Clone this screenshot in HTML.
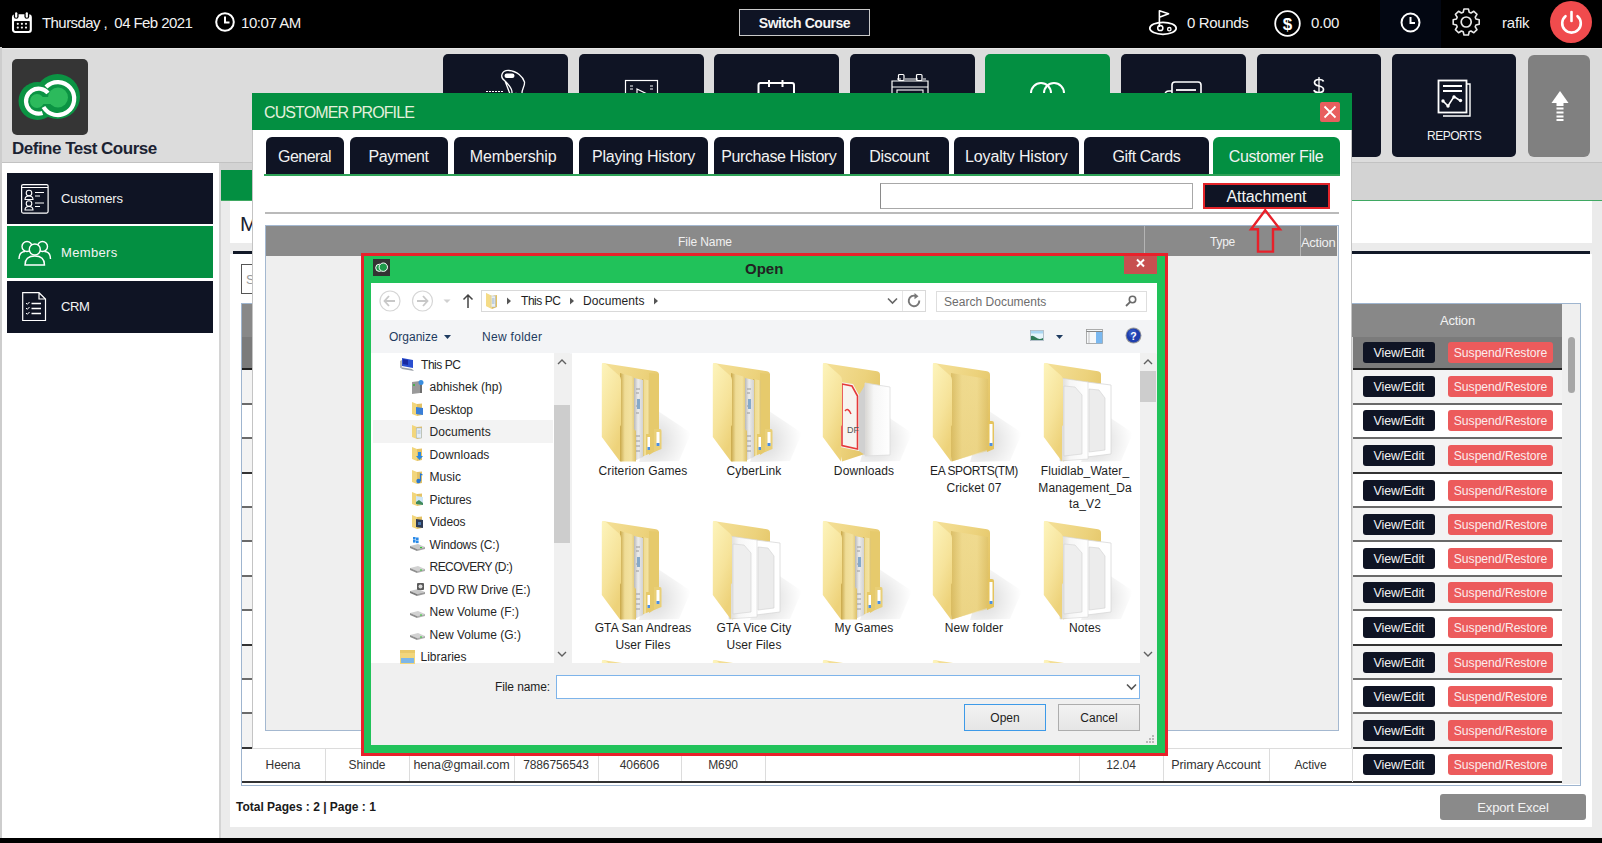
<!DOCTYPE html>
<html><head><meta charset="utf-8">
<style>
*{box-sizing:border-box;margin:0;padding:0}
html,body{width:1602px;height:843px;overflow:hidden;background:#dcdcdc;font-family:"Liberation Sans",sans-serif}
.a{position:absolute}
.t{position:absolute;white-space:nowrap;line-height:1}
.c{position:absolute;display:flex;align-items:center;justify-content:center;white-space:nowrap}
.navy{background:#0f1424}
svg{position:absolute;overflow:visible}

</style></head><body>
<svg width="0" height="0" style="position:absolute;left:0;top:0">
<defs>
 <linearGradient id="gFront" x1="0" y1="0" x2="0.5" y2="1"><stop offset="0" stop-color="#fdf4bc"/><stop offset="0.6" stop-color="#f6e39a"/><stop offset="1" stop-color="#edd27a"/></linearGradient>
 <linearGradient id="gBack" x1="0" y1="0" x2="1" y2="0.6"><stop offset="0" stop-color="#f5e19a"/><stop offset="0.6" stop-color="#ecd27c"/><stop offset="1" stop-color="#e2c262"/></linearGradient>
 <linearGradient id="gPanel" x1="0" y1="0" x2="1" y2="0"><stop offset="0" stop-color="#c9a84a"/><stop offset="0.3" stop-color="#efdc96"/><stop offset="0.7" stop-color="#f3e2a0"/><stop offset="1" stop-color="#dcc06a"/></linearGradient>
 <linearGradient id="gPaper" x1="0" y1="0" x2="1" y2="0"><stop offset="0" stop-color="#b9b9b9"/><stop offset="0.45" stop-color="#ececec"/><stop offset="1" stop-color="#d2d2d2"/></linearGradient>
 <linearGradient id="gWhite" x1="0" y1="0" x2="1" y2="0"><stop offset="0" stop-color="#d8d6d2"/><stop offset="0.35" stop-color="#f6f6f6"/><stop offset="1" stop-color="#ffffff"/></linearGradient>
 <radialGradient id="gShadow" cx="0.25" cy="0.6" r="0.75"><stop offset="0" stop-color="#000" stop-opacity="0.16"/><stop offset="0.6" stop-color="#000" stop-opacity="0.06"/><stop offset="1" stop-color="#000" stop-opacity="0"/></radialGradient>
 <g id="f_back">
  <path d="M56 48 L92 72 L80 100 L40 101Z" fill="url(#gShadow)"/>
  <path d="M3.5 2 L57 10.2 Q60 10.8 60 14 V88 L22 100.5 Z" fill="url(#gBack)"/>
 </g>
 <path id="f_frontp" d="M3.5 2 Q5 1.5 7 3 L20 14.5 Q22 16 22 19 V64 L21 65.5 V100.5 L2.8 76 V3.5 Z"/>
 <symbol id="f_docs" viewBox="0 0 92 104">
  <use href="#f_back"/>
  <path d="M50 12 L60 13 V88 L50 94Z" fill="#e6ca6c"/>
  <path d="M55 68 H61 Q62.5 68 62.5 70 V88 L55 91Z" fill="#e9cf77"/>
  <rect x="57.5" y="71" width="3" height="14" fill="#fff"/><rect x="57.5" y="82" width="3" height="3" fill="#4c8fe0"/>
  <path d="M43 18 L51 19.5 V92 L43 96Z" fill="url(#gPanel)"/>
  <path d="M47 73 H52 V92 L47 94Z" fill="#e6c96a"/>
  <rect x="48.5" y="76" width="2.5" height="13" fill="#fff"/><rect x="48.5" y="86" width="2.5" height="3" fill="#4c8fe0"/>
  <path d="M35 17 L44 19 V96 L35 100Z" fill="url(#gPaper)"/>
  <path d="M37 28 H41 M37 32 H40 M37 45 H41 M37 52 H40 M37 75 H41 M37 80 H41 M37 85 H41 M37 90 H41" stroke="#9a9a9a" stroke-width="1"/>
  <rect x="38" y="38" width="3" height="10" fill="#86a9c9"/>
  <path d="M21 12 L35 16 V68 L37 70 V100.5 L21 100.5Z" fill="url(#gPanel)"/>
  <use href="#f_frontp" fill="url(#gFront)"/>
 </symbol>
 <symbol id="f_plain" viewBox="0 0 92 104">
  <use href="#f_back"/>
  <path d="M57 60 H62 Q64 60 64 62 V88 L57 91Z" fill="#e5c45e"/>
  <rect x="59.5" y="63" width="3" height="22" fill="#fff"/><rect x="59.5" y="82" width="3" height="3" fill="#4c8fe0"/>
  <path d="M21 12 L58 18 V90 L21 100.5Z" fill="url(#gPanel)" opacity="0.55"/>
  <use href="#f_frontp" fill="url(#gFront)"/>
 </symbol>
 <symbol id="f_pdf" viewBox="0 0 92 104">
  <use href="#f_back"/>
  <path d="M45 22 L70 26 V94 L45 95Z" fill="url(#gWhite)" stroke="#dcdcdc" stroke-width="0.8"/>
  <path d="M20 21 L33 23 L39 34 V90 L20 86Z" fill="#f7f4f0"/>
  <path d="M22 23 L32 25 L37.5 35 V88 L22 84.5Z" fill="none" stroke="#e53a3a" stroke-width="1.6"/>
  <path d="M25 50 Q28 46 31 53" fill="none" stroke="#e53a3a" stroke-width="1.4"/>
  <text x="27" y="72" font-family="Liberation Sans" font-size="9" fill="#555">DF</text>
  <path d="M39 34 L45 24 V94 L39 90Z" fill="#d0d0d0"/>
  <use href="#f_frontp" fill="url(#gFront)"/>
 </symbol>
 <symbol id="f_white" viewBox="0 0 92 104">
  <use href="#f_back"/>
  <path d="M46 21 L70 24 V93 L46 96Z" fill="#fff" stroke="#d8d8d8" stroke-width="0.8"/>
  <path d="M48 28 L58 29 L64 37 V89 L48 91Z" fill="#ececec" stroke="#d0d0d0" stroke-width="0.6"/>
  <path d="M19 17 L47 21 V98 L19 100Z" fill="url(#gWhite)" stroke="#d4d4d4" stroke-width="0.6"/>
  <path d="M23 25 L34 26 L41 34 V93 L23 95Z" fill="#eeeeee" stroke="#d2d2d2" stroke-width="0.6"/>
  <use href="#f_frontp" fill="url(#gFront)"/>
 </symbol>
 <!-- small nav icons 17x16 -->
 <symbol id="i_pc" viewBox="0 0 17 16"><path d="M3 2 L14 4 V12 L3 10Z" fill="#2a4fd0"/><path d="M4 3 L9 4 V9 L4 8Z" fill="#1a2aa0"/><path d="M1 11 L13 13 L15 15 L3 13Z" fill="#9aa0a8"/><path d="M1 5 L3 4 V11 L1 12Z" fill="#b5b5b5"/></symbol>
 <symbol id="i_net" viewBox="0 0 17 16"><path d="M3 3 L11 2 V14 L3 15Z" fill="#9a9a9a"/><path d="M11 2 L13 3 V14 L11 14Z" fill="#6e6e6e"/><circle cx="12" cy="3.5" r="2.5" fill="#3a8ee0"/><rect x="4" y="5" width="2" height="2" fill="#4caf50"/></symbol>
 <symbol id="i_fdesk" viewBox="0 0 17 16"><path d="M3 1 L8 3 V15 L3 13Z" fill="#f2d67c"/><path d="M8 3 L13 2.5 V14 L8 15Z" fill="#e4c265"/><path d="M7 6 L14 7 V14 L7 13Z" fill="#3a7fd8"/></symbol>
 <symbol id="i_fdoc" viewBox="0 0 17 16"><path d="M3 1 L8 3 V15 L3 13Z" fill="#f2d67c"/><path d="M8 3 L13 2.5 V14 L8 15Z" fill="#e4c265"/><rect x="7.5" y="4" width="5" height="10" fill="#e6eef6" stroke="#9ab0c6" stroke-width="0.5"/><path d="M8.5 7 H11.5 M8.5 9 H11.5" stroke="#7a9ab8" stroke-width="0.6"/></symbol>
 <symbol id="i_fdl" viewBox="0 0 17 16"><path d="M3 1 L8 3 V15 L3 13Z" fill="#f2d67c"/><path d="M8 3 L13 2.5 V14 L8 15Z" fill="#e4c265"/><path d="M9 6 H12 V10 H14 L10.5 14 L7 10 H9Z" fill="#2a88e0"/></symbol>
 <symbol id="i_fmus" viewBox="0 0 17 16"><path d="M3 1 L8 3 V15 L3 13Z" fill="#f2d67c"/><path d="M8 3 L13 2.5 V14 L8 15Z" fill="#e4c265"/><circle cx="9.5" cy="12" r="2.2" fill="#2a78d0"/><path d="M11.5 12 V5 L13.5 6" fill="none" stroke="#2a78d0" stroke-width="1.2"/></symbol>
 <symbol id="i_fpic" viewBox="0 0 17 16"><path d="M3 1 L8 3 V15 L3 13Z" fill="#f2d67c"/><path d="M8 3 L13 2.5 V14 L8 15Z" fill="#e4c265"/><path d="M7 5 L14 6 V14 L7 13Z" fill="#cfe6f6"/><path d="M7 11 L10 9 L14 12 V14 L7 13Z" fill="#3f8a5a"/></symbol>
 <symbol id="i_fvid" viewBox="0 0 17 16"><path d="M3 1 L8 3 V15 L3 13Z" fill="#f2d67c"/><path d="M8 3 L13 2.5 V14 L8 15Z" fill="#e4c265"/><path d="M7 5 L14 6 V14 L7 13Z" fill="#2d3a55"/><rect x="9" y="8" width="3" height="3" fill="#4a7ab0"/></symbol>
 <symbol id="i_win" viewBox="0 0 17 16"><path d="M1 10 L9 8 L16 11 L8 13Z" fill="#c8c8c8"/><path d="M1 10 V12 L8 15 V13Z" fill="#8a8a8a"/><path d="M8 13 V15 L16 13 V11Z" fill="#a5a5a5"/><g fill="#2a8ae8"><rect x="4" y="1" width="2.6" height="2.6"/><rect x="7" y="1.5" width="2.6" height="2.6"/><rect x="4" y="4" width="2.6" height="2.6"/><rect x="7" y="4.5" width="2.6" height="2.6"/></g><rect x="11" y="11" width="2" height="1" fill="#3c3"/></symbol>
 <symbol id="i_drv" viewBox="0 0 17 16"><path d="M1 9 L9 7 L16 10 L8 12Z" fill="#d2d2d2"/><path d="M1 9 V11 L8 14 V12Z" fill="#8f8f8f"/><path d="M8 12 V14 L16 12 V10Z" fill="#adadad"/><rect x="11" y="10.5" width="2" height="1" fill="#3c3"/></symbol>
 <symbol id="i_dvd" viewBox="0 0 17 16"><path d="M1 10 L9 8 L16 11 L8 13Z" fill="#c8c8c8"/><path d="M1 10 V12 L8 15 V13Z" fill="#7a7a7a"/><path d="M8 13 V15 L16 13 V11Z" fill="#9a9a9a"/><rect x="8" y="2" width="7" height="7" rx="1" fill="#5a5a5a"/><circle cx="11.5" cy="5.5" r="2" fill="#ddd"/></symbol>
 <symbol id="i_lib" viewBox="0 0 17 16"><rect x="1" y="3" width="15" height="12" fill="#f2d67c"/><rect x="1" y="1" width="15" height="3" fill="#e9c96a"/><rect x="2" y="9" width="13" height="5" fill="#7db6e8"/></symbol>
</defs></svg>
<!-- TOP BAR -->
<div class="a" style="left:0;top:0;width:1602px;height:48px;background:#000"></div>
<!-- calendar icon -->
<svg style="left:12px;top:12px" width="20" height="21" viewBox="0 0 20 21">
 <rect x="1" y="3.2" width="17.8" height="16.8" rx="2.2" fill="none" stroke="#fff" stroke-width="2.1"/>
 <rect x="1" y="3.2" width="17.8" height="6" rx="1.5" fill="#fff"/>
 <rect x="2.8" y="9.2" width="14.2" height="9" fill="#000"/>
 <rect x="1.8" y="0" width="4.8" height="6.8" rx="2.4" fill="#000"/><rect x="12.4" y="0" width="4.8" height="6.8" rx="2.4" fill="#000"/>
 <rect x="3.1" y="0.2" width="2.2" height="5.6" rx="1.1" fill="#fff"/><rect x="13.7" y="0.2" width="2.2" height="5.6" rx="1.1" fill="#fff"/>
 <g fill="#f0f0f0"><circle cx="5.8" cy="11.8" r="1.1"/><circle cx="9.9" cy="11.8" r="1.1"/><circle cx="14" cy="11.8" r="1.1"/>
 <circle cx="5.8" cy="15.6" r="1.1"/><circle cx="9.9" cy="15.6" r="1.1"/><circle cx="14" cy="15.6" r="1.1"/></g>
</svg>
<div class="t" style="left:42px;top:15px;font-size:15px;color:#f2f2f2;letter-spacing:-0.57px">Thursday ,&nbsp; 04 Feb 2021</div>
<!-- clock icon -->
<svg style="left:215px;top:12px" width="20" height="20" viewBox="0 0 20 20">
 <circle cx="10" cy="10" r="8.8" fill="none" stroke="#fff" stroke-width="2"/>
 <path d="M10 4.5 V10.5 H14.5" fill="none" stroke="#fff" stroke-width="2"/>
</svg>
<div class="t" style="left:241px;top:15px;font-size:15px;color:#f2f2f2;letter-spacing:-0.45px">10:07 AM</div>
<!-- switch course -->
<div class="c" style="left:739px;top:9px;width:131px;height:27px;background:#0f1424;border:1px solid #c9c9c9;font-size:14px;font-weight:bold;color:#f5f5f5;letter-spacing:-0.45px">Switch Course</div>
<!-- golf icon -->
<svg style="left:1149px;top:10px" width="29" height="26" viewBox="0 0 29 26">
 <ellipse cx="14" cy="18.3" rx="13.2" ry="6" fill="none" stroke="#fff" stroke-width="1.7"/>
 <path d="M10.4 17 V0.8 L19.6 3.8 L10.4 7.2" fill="none" stroke="#fff" stroke-width="1.6" stroke-linejoin="round"/>
 <circle cx="11.3" cy="18" r="2.6" fill="none" stroke="#fff" stroke-width="1.5"/>
 <circle cx="20.3" cy="19.2" r="1.7" fill="none" stroke="#fff" stroke-width="1.4"/>
</svg>
<div class="t" style="left:1187px;top:15px;font-size:15px;color:#f2f2f2;letter-spacing:-0.35px">0 Rounds</div>
<!-- dollar -->
<svg style="left:1274px;top:10px" width="27" height="27" viewBox="0 0 27 27">
 <circle cx="13.5" cy="13.5" r="12.3" fill="none" stroke="#fff" stroke-width="1.8"/>
 <text x="13.5" y="19.5" text-anchor="middle" font-family="Liberation Sans" font-weight="bold" font-size="17" fill="#fff">$</text>
</svg>
<div class="t" style="left:1311px;top:15px;font-size:15px;color:#f2f2f2;letter-spacing:-0.3px">0.00</div>
<!-- clock area -->
<div class="a" style="left:1380px;top:0;width:61px;height:48px;background:#030712"></div>
<svg style="left:1400px;top:12px" width="21" height="21" viewBox="0 0 21 21">
 <circle cx="10.5" cy="10.5" r="9" fill="none" stroke="#fff" stroke-width="2"/>
 <path d="M10.5 5 V11 H15" fill="none" stroke="#fff" stroke-width="2"/>
</svg>
<!-- gear -->
<svg style="left:1451px;top:8px" width="30" height="28" viewBox="0 0 30 28">
 <g transform="translate(15.2 14)" fill="none" stroke="#e8e8e8" stroke-width="1.6" stroke-linejoin="round">
  <path d="M9.74,-3.01 L13.01,-2.23 L13.01,2.23 L9.74,3.01 L9.02,4.76 L10.78,7.62 L7.62,10.78 L4.76,9.02 L3.01,9.74 L2.23,13.01 L-2.23,13.01 L-3.01,9.74 L-4.76,9.02 L-7.62,10.78 L-10.78,7.62 L-9.02,4.76 L-9.74,3.01 L-13.01,2.23 L-13.01,-2.23 L-9.74,-3.01 L-9.02,-4.76 L-10.78,-7.62 L-7.62,-10.78 L-4.76,-9.02 L-3.01,-9.74 L-2.23,-13.01 L2.23,-13.01 L3.01,-9.74 L4.76,-9.02 L7.62,-10.78 L10.78,-7.62 L9.02,-4.76 Z"/>
 </g>
 <circle cx="15.2" cy="14" r="5" fill="none" stroke="#e8e8e8" stroke-width="1.7"/>
</svg>
<div class="t" style="left:1502px;top:15px;font-size:15px;color:#f2f2f2;letter-spacing:-0.2px">rafik</div>
<!-- power -->
<div class="a" style="left:1550px;top:1px;width:42px;height:42px;border-radius:50%;background:#f04b4d"></div>
<svg style="left:1550px;top:1px" width="42" height="42" viewBox="0 0 42 42">
 <path d="M15.5 15.2 A9.3 9.3 0 1 0 27.5 15.2" fill="none" stroke="#fff" stroke-width="2.6" stroke-linecap="round"/>
 <path d="M21.5 11 V20" stroke="#fff" stroke-width="2.6" stroke-linecap="round"/>
</svg>
<!-- HEADER AREA -->
<div class="a" style="left:0;top:47px;width:2px;height:791px;background:#cdcdcd"></div>
<div class="a" style="left:2px;top:48px;width:1600px;height:115px;background:#dcdcdc"></div><div class="a" style="left:2px;top:48px;width:1600px;height:1px;background:#e8e8e8"></div>
<div class="a" style="left:2px;top:162px;width:1600px;height:1px;background:#c2c2c2"></div>
<!-- logo -->
<div class="a" style="left:12px;top:59px;width:76px;height:76px;background:#353535;border-radius:5px"></div>
<svg style="left:12px;top:60px" width="76" height="76" viewBox="0 0 76 76">
 <circle cx="25.5" cy="41" r="19" fill="#0b9343"/>
 <circle cx="45.5" cy="36.5" r="22.5" fill="#0b9343"/>
 <path d="M36 33 A12.5 12.5 0 1 0 30.5 53" fill="none" stroke="#fff" stroke-width="4.2"/>
 <path d="M34 27 A16.5 16.5 0 1 1 31.5 47" fill="none" stroke="#fff" stroke-width="4.2"/>
 <circle cx="25" cy="41" r="7" fill="#2cba5c"/>
 <circle cx="46" cy="37.5" r="10" fill="#2cba5c"/>
 <rect x="25" y="37" width="18" height="7" fill="#2cba5c"/>
</svg>
<div class="t" style="left:12px;top:140px;font-size:17px;font-weight:bold;color:#1b2232;letter-spacing:-0.5px">Define Test Course</div>

<!-- nav buttons -->
<div class="a navy" style="left:443px;top:54px;width:125px;height:103px;border-radius:5px"></div>
<div class="a navy" style="left:579px;top:54px;width:125px;height:103px;border-radius:5px"></div>
<div class="a navy" style="left:714px;top:54px;width:125px;height:103px;border-radius:5px"></div>
<div class="a navy" style="left:850px;top:54px;width:125px;height:103px;border-radius:5px"></div>
<div class="a" style="left:985px;top:54px;width:125px;height:103px;border-radius:5px;background:#038f41"></div>
<div class="a navy" style="left:1121px;top:54px;width:125px;height:103px;border-radius:5px"></div>
<div class="a navy" style="left:1257px;top:54px;width:124px;height:103px;border-radius:5px"></div>
<div class="a navy" style="left:1392px;top:54px;width:124px;height:103px;border-radius:5px"></div>
<div class="a" style="left:1528px;top:55px;width:62px;height:102px;border-radius:6px;background:#808080"></div>
<!-- btn icons (tops, mostly hidden) -->
<svg style="left:483px;top:69px" width="50" height="30" viewBox="0 0 50 30">
 <path d="M22 12 C16 8 19 1 26 1.5 C34 2 40 8 41.5 13 C42 17 39 20 39 24 V30 M29 30 V23 C29 19 26 16 22 12 Z" fill="none" stroke="#fff" stroke-width="1.3"/>
 <rect x="21.5" y="4.5" width="10" height="4.5" rx="2.2" fill="#fff"/>
 <circle cx="33" cy="25" r="1.2" fill="#fff"/>
 <path d="M3 22.5 H20" stroke="#fff" stroke-width="1.2" stroke-dasharray="2 1"/>
</svg>
<svg style="left:625px;top:80px" width="34" height="20" viewBox="0 0 34 20">
 <rect x="0.5" y="0.5" width="32" height="18" fill="none" stroke="#fff" stroke-width="1.2"/>
 <path d="M5 6 H8 M5 9 H8 M25 6 H28 M25 9 H28" stroke="#fff" stroke-width="1"/>
 <path d="M12 9 L20 13 L12 16 Z" fill="none" stroke="#fff" stroke-width="1.2"/>
</svg>
<svg style="left:757px;top:79px" width="40" height="20" viewBox="0 0 40 20">
 <path d="M1.5 19 V6 Q1.5 4 3.5 4 H35 Q37 4 37 6 V19" fill="none" stroke="#fff" stroke-width="2"/>
 <path d="M12 1 V8 M25.5 1 V8" stroke="#fff" stroke-width="2"/>
</svg>
<svg style="left:891px;top:73px" width="40" height="22" viewBox="0 0 40 22">
 <path d="M1 21 V8 H37 V21 M1 14 H37" fill="none" stroke="#fff" stroke-width="1.2"/>
 <path d="M6 6 H10 M14 6 H27 M32 6 H35" stroke="#fff" stroke-width="1.2"/>
 <rect x="7.5" y="1.5" width="5.5" height="6" rx="1" fill="none" stroke="#fff" stroke-width="1.2"/>
 <rect x="25.5" y="1.5" width="5.5" height="6" rx="1" fill="none" stroke="#fff" stroke-width="1.2"/>
 <rect x="6" y="17" width="26" height="5" fill="none" stroke="#fff" stroke-width="1.1"/>
</svg>
<svg style="left:1029px;top:82px" width="38" height="14" viewBox="0 0 38 14">
 <circle cx="12" cy="11" r="10" fill="none" stroke="#fff" stroke-width="2"/>
 <circle cx="25" cy="11" r="10" fill="none" stroke="#fff" stroke-width="2"/>
</svg>
<svg style="left:1164px;top:81px" width="40" height="14" viewBox="0 0 40 14">
 <rect x="8" y="1" width="29" height="16" rx="3" fill="none" stroke="#fff" stroke-width="1.6"/>
 <path d="M1 14 Q1 10 5 10 H8" fill="none" stroke="#fff" stroke-width="1.6"/>
 <path d="M12 9 H32" stroke="#fff" stroke-width="1.8"/>
</svg>
<svg style="left:1312px;top:76px" width="14" height="20" viewBox="0 0 14 20"><path d="M7 1 V19" stroke="#fff" stroke-width="1.3"/><path d="M11.5 5.5 Q11 3.5 7 3.5 Q2.5 3.5 2.5 6.5 Q2.5 9 7 10 Q11.5 11 11.5 13.5 Q11.5 16.5 7 16.5 Q2.5 16.5 2 14" fill="none" stroke="#fff" stroke-width="1.7"/></svg>
<!-- reports icon -->
<svg style="left:1437px;top:79px" width="36" height="40" viewBox="0 0 36 40">
 <path d="M6 5 H33 V37 H6" fill="none" stroke="#fff" stroke-width="1.4"/>
 <rect x="1.5" y="1.5" width="28" height="32" fill="#0f1424" stroke="#fff" stroke-width="1.8"/>
 <path d="M6 7 H25 M6 12 H25" stroke="#fff" stroke-width="1.8"/>
 <path d="M6 22 L11 27 L17 17.5 L23 21.5" fill="none" stroke="#fff" stroke-width="1.6"/>
 <circle cx="6" cy="22" r="1.7" fill="#fff"/><circle cx="11" cy="27" r="1.7" fill="#fff"/><circle cx="17" cy="18" r="1.7" fill="#fff"/><circle cx="23.5" cy="21.5" r="1.7" fill="#fff"/>
</svg>
<div class="t" style="left:1427px;top:130px;font-size:12px;color:#f2f2f2;letter-spacing:-0.5px">REPORTS</div>
<!-- up arrow -->
<svg style="left:1550px;top:90px" width="20" height="32" viewBox="0 0 20 32">
 <path d="M10 1 L18.5 13 H1.5 Z" fill="#fff"/>
 <rect x="6.5" y="12" width="7" height="4" fill="#fff"/>
 <rect x="6.5" y="17.5" width="7" height="2" fill="#fff"/>
 <rect x="6.5" y="21.5" width="7" height="2" fill="#fff"/>
 <rect x="6.5" y="25.5" width="7" height="2" fill="#fff"/>
 <rect x="6.5" y="29" width="7" height="2" fill="#fff"/>
</svg>
<!-- SIDEBAR -->
<div class="a" style="left:2px;top:163px;width:217px;height:675px;background:#fff"></div>
<div class="a" style="left:219px;top:163px;width:2px;height:675px;background:#d4d4d4"></div>
<div class="a navy" style="left:7px;top:173px;width:206px;height:51px"></div>
<div class="a" style="left:7px;top:226px;width:206px;height:52px;background:#038f41"></div>
<div class="a navy" style="left:7px;top:281px;width:206px;height:52px"></div>
<svg style="left:21px;top:184px" width="28" height="30" viewBox="0 0 28 30">
 <rect x="0.6" y="0.6" width="26.5" height="28.5" rx="1.5" fill="none" stroke="#fff" stroke-width="1.2"/>
 <path d="M0.6 3.5 H27" stroke="#fff" stroke-width="1"/>
 <circle cx="8" cy="9" r="2.8" fill="none" stroke="#fff" stroke-width="1.1"/>
 <path d="M4 15.5 Q4 12 8 12 Q12 12 12 15.5 Z" fill="none" stroke="#fff" stroke-width="1.1"/>
 <circle cx="8" cy="19.5" r="2.8" fill="none" stroke="#fff" stroke-width="1.1"/>
 <path d="M4 26 Q4 22.5 8 22.5 Q12 22.5 12 26 Z" fill="none" stroke="#fff" stroke-width="1.1"/>
 <path d="M14 8.5 H23 M14 12 H19 M14 19 H23 M14 22.5 H19" stroke="#fff" stroke-width="1.2"/>
</svg>
<div class="t" style="left:61px;top:192px;font-size:13px;color:#f4f4f4;letter-spacing:-0.1px">Customers</div>
<svg style="left:18px;top:240px" width="34" height="26" viewBox="0 0 34 26">
 <g fill="none" stroke="#fff" stroke-width="1.4">
 <circle cx="9" cy="6.5" r="5"/><circle cx="24.5" cy="6.5" r="5"/>
 <path d="M1 19 Q1 12 7 11.5"/><path d="M32.5 19 Q32.5 12 26.5 11.5"/>
 <circle cx="16.8" cy="9.5" r="5.5" fill="#038f41"/>
 <path d="M7 25 Q7 16 16.8 16 Q26.5 16 26.5 25 Z" fill="#038f41"/>
 </g>
</svg>
<div class="t" style="left:61px;top:246px;font-size:13px;color:#f4f4f4;letter-spacing:0.35px">Members</div>
<svg style="left:22px;top:292px" width="25" height="30" viewBox="0 0 25 30">
 <path d="M0.7 0.7 H17 L23.5 7 V28.5 H0.7 Z M17 0.7 V7 H23.5" fill="none" stroke="#fff" stroke-width="1.2"/>
 <path d="M4 11 L5.3 12.3 L7.5 10 M4 16 L5.3 17.3 L7.5 15 M4 21 L5.3 22.3 L7.5 20" fill="none" stroke="#fff" stroke-width="1"/>
 <path d="M9.5 11.5 H19 M9.5 16.5 H19 M9.5 21.5 H19" stroke="#fff" stroke-width="1.3"/>
</svg>
<div class="t" style="left:61px;top:300px;font-size:13px;color:#f4f4f4;letter-spacing:-0.4px">CRM</div>
<!-- CONTENT -->
<div class="a" style="left:221px;top:163px;width:1381px;height:675px;background:#ebebeb"></div>
<div class="a" style="left:221px;top:163px;width:1381px;height:37px;background:#d3d3d3"></div>
<div class="a" style="left:221px;top:170px;width:300px;height:30px;background:#038f41"></div>
<div class="a" style="left:221px;top:200px;width:1381px;height:1px;background:#3fa862"></div>
<div class="a" style="left:230px;top:201px;width:1362px;height:42px;background:#fff"></div>
<div class="t" style="left:240px;top:213px;font-size:21px;color:#1b2232">Members</div>
<div class="a" style="left:233px;top:251px;width:1357px;height:3px;background:#111827"></div>
<div class="a" style="left:230px;top:254px;width:1362px;height:573px;background:#fff"></div>
<div class="a" style="left:241px;top:264px;width:300px;height:30px;border:1px solid #555;background:#fff"></div>
<div class="t" style="left:246px;top:273px;font-size:13px;color:#999">Search</div>
<div class="a" style="left:241px;top:303px;width:1340px;height:483px;border:1px solid #9fb5cf;background:#fff"></div>
<div class="a" style="left:1562px;top:304px;width:18px;height:480px;background:#efefef"></div>
<div class="a" style="left:1568px;top:337px;width:7px;height:56px;border-radius:4px;background:#a6a6a6"></div>
<div class="a" style="left:242px;top:304px;width:1320px;height:33px;background:#888"></div>
<div class="t" style="left:1440px;top:314px;font-size:13px;color:#f2f2f2;letter-spacing:-0.2px">Action</div>
<div class="a" style="left:242px;top:337px;width:1320px;height:31px;background:#7b7b7b"></div>
<div class="a" style="left:242px;top:368px;width:1320px;height:2px;background:#1e1e1e"></div>
<div class="c" style="left:1363px;top:342px;width:72px;height:21px;border-radius:3px;background:#0f1424;color:#f2f2f2;font-size:12.5px;letter-spacing:-0.1px">View/Edit</div>
<div class="c" style="left:1448px;top:342px;width:105px;height:21px;border-radius:3px;background:#ec5b5c;color:#fbecec;font-size:12.2px;letter-spacing:-0.05px">Suspend/Restore</div>
<div class="a" style="left:242px;top:370px;width:1320px;height:33px;background:#f3f3f3"></div>
<div class="a" style="left:242px;top:403px;width:1320px;height:2px;background:#6a6a6a"></div>
<div class="c" style="left:1363px;top:376px;width:72px;height:21px;border-radius:3px;background:#0f1424;color:#f2f2f2;font-size:12.5px;letter-spacing:-0.1px">View/Edit</div>
<div class="c" style="left:1448px;top:376px;width:105px;height:21px;border-radius:3px;background:#ec5b5c;color:#fbecec;font-size:12.2px;letter-spacing:-0.05px">Suspend/Restore</div>
<div class="a" style="left:242px;top:405px;width:1320px;height:32px;background:#fff"></div>
<div class="a" style="left:242px;top:437px;width:1320px;height:2px;background:#6a6a6a"></div>
<div class="c" style="left:1363px;top:410px;width:72px;height:21px;border-radius:3px;background:#0f1424;color:#f2f2f2;font-size:12.5px;letter-spacing:-0.1px">View/Edit</div>
<div class="c" style="left:1448px;top:410px;width:105px;height:21px;border-radius:3px;background:#ec5b5c;color:#fbecec;font-size:12.2px;letter-spacing:-0.05px">Suspend/Restore</div>
<div class="a" style="left:242px;top:439px;width:1320px;height:33px;background:#f3f3f3"></div>
<div class="a" style="left:242px;top:472px;width:1320px;height:2px;background:#333"></div>
<div class="c" style="left:1363px;top:445px;width:72px;height:21px;border-radius:3px;background:#0f1424;color:#f2f2f2;font-size:12.5px;letter-spacing:-0.1px">View/Edit</div>
<div class="c" style="left:1448px;top:445px;width:105px;height:21px;border-radius:3px;background:#ec5b5c;color:#fbecec;font-size:12.2px;letter-spacing:-0.05px">Suspend/Restore</div>
<div class="a" style="left:242px;top:474px;width:1320px;height:32px;background:#fff"></div>
<div class="a" style="left:242px;top:506px;width:1320px;height:2px;background:#6a6a6a"></div>
<div class="c" style="left:1363px;top:480px;width:72px;height:21px;border-radius:3px;background:#0f1424;color:#f2f2f2;font-size:12.5px;letter-spacing:-0.1px">View/Edit</div>
<div class="c" style="left:1448px;top:480px;width:105px;height:21px;border-radius:3px;background:#ec5b5c;color:#fbecec;font-size:12.2px;letter-spacing:-0.05px">Suspend/Restore</div>
<div class="a" style="left:242px;top:508px;width:1320px;height:32px;background:#f3f3f3"></div>
<div class="a" style="left:242px;top:540px;width:1320px;height:2px;background:#6a6a6a"></div>
<div class="c" style="left:1363px;top:514px;width:72px;height:21px;border-radius:3px;background:#0f1424;color:#f2f2f2;font-size:12.5px;letter-spacing:-0.1px">View/Edit</div>
<div class="c" style="left:1448px;top:514px;width:105px;height:21px;border-radius:3px;background:#ec5b5c;color:#fbecec;font-size:12.2px;letter-spacing:-0.05px">Suspend/Restore</div>
<div class="a" style="left:242px;top:542px;width:1320px;height:33px;background:#fff"></div>
<div class="a" style="left:242px;top:575px;width:1320px;height:2px;background:#6a6a6a"></div>
<div class="c" style="left:1363px;top:548px;width:72px;height:21px;border-radius:3px;background:#0f1424;color:#f2f2f2;font-size:12.5px;letter-spacing:-0.1px">View/Edit</div>
<div class="c" style="left:1448px;top:548px;width:105px;height:21px;border-radius:3px;background:#ec5b5c;color:#fbecec;font-size:12.2px;letter-spacing:-0.05px">Suspend/Restore</div>
<div class="a" style="left:242px;top:577px;width:1320px;height:32px;background:#f3f3f3"></div>
<div class="a" style="left:242px;top:609px;width:1320px;height:2px;background:#6a6a6a"></div>
<div class="c" style="left:1363px;top:582px;width:72px;height:21px;border-radius:3px;background:#0f1424;color:#f2f2f2;font-size:12.5px;letter-spacing:-0.1px">View/Edit</div>
<div class="c" style="left:1448px;top:582px;width:105px;height:21px;border-radius:3px;background:#ec5b5c;color:#fbecec;font-size:12.2px;letter-spacing:-0.05px">Suspend/Restore</div>
<div class="a" style="left:242px;top:611px;width:1320px;height:33px;background:#fff"></div>
<div class="a" style="left:242px;top:644px;width:1320px;height:2px;background:#333"></div>
<div class="c" style="left:1363px;top:617px;width:72px;height:21px;border-radius:3px;background:#0f1424;color:#f2f2f2;font-size:12.5px;letter-spacing:-0.1px">View/Edit</div>
<div class="c" style="left:1448px;top:617px;width:105px;height:21px;border-radius:3px;background:#ec5b5c;color:#fbecec;font-size:12.2px;letter-spacing:-0.05px">Suspend/Restore</div>
<div class="a" style="left:242px;top:646px;width:1320px;height:32px;background:#f3f3f3"></div>
<div class="a" style="left:242px;top:678px;width:1320px;height:2px;background:#6a6a6a"></div>
<div class="c" style="left:1363px;top:652px;width:72px;height:21px;border-radius:3px;background:#0f1424;color:#f2f2f2;font-size:12.5px;letter-spacing:-0.1px">View/Edit</div>
<div class="c" style="left:1448px;top:652px;width:105px;height:21px;border-radius:3px;background:#ec5b5c;color:#fbecec;font-size:12.2px;letter-spacing:-0.05px">Suspend/Restore</div>
<div class="a" style="left:242px;top:680px;width:1320px;height:32px;background:#fff"></div>
<div class="a" style="left:242px;top:712px;width:1320px;height:2px;background:#6a6a6a"></div>
<div class="c" style="left:1363px;top:686px;width:72px;height:21px;border-radius:3px;background:#0f1424;color:#f2f2f2;font-size:12.5px;letter-spacing:-0.1px">View/Edit</div>
<div class="c" style="left:1448px;top:686px;width:105px;height:21px;border-radius:3px;background:#ec5b5c;color:#fbecec;font-size:12.2px;letter-spacing:-0.05px">Suspend/Restore</div>
<div class="a" style="left:242px;top:714px;width:1320px;height:33px;background:#f3f3f3"></div>
<div class="a" style="left:242px;top:747px;width:1320px;height:2px;background:#333"></div>
<div class="c" style="left:1363px;top:720px;width:72px;height:21px;border-radius:3px;background:#0f1424;color:#f2f2f2;font-size:12.5px;letter-spacing:-0.1px">View/Edit</div>
<div class="c" style="left:1448px;top:720px;width:105px;height:21px;border-radius:3px;background:#ec5b5c;color:#fbecec;font-size:12.2px;letter-spacing:-0.05px">Suspend/Restore</div>
<div class="a" style="left:242px;top:749px;width:1320px;height:32px;background:#fff"></div>
<div class="a" style="left:242px;top:781px;width:1320px;height:2px;background:#333"></div>
<div class="c" style="left:1363px;top:754px;width:72px;height:21px;border-radius:3px;background:#0f1424;color:#f2f2f2;font-size:12.5px;letter-spacing:-0.1px">View/Edit</div>
<div class="c" style="left:1448px;top:754px;width:105px;height:21px;border-radius:3px;background:#ec5b5c;color:#fbecec;font-size:12.2px;letter-spacing:-0.05px">Suspend/Restore</div>
<div class="a" style="left:1352px;top:337px;width:1px;height:445px;background:#ddd"></div>
<div class="a" style="left:325px;top:749px;width:1px;height:32px;background:#dcdcdc"></div>
<div class="a" style="left:409px;top:749px;width:1px;height:32px;background:#dcdcdc"></div>
<div class="a" style="left:514px;top:749px;width:1px;height:32px;background:#dcdcdc"></div>
<div class="a" style="left:598px;top:749px;width:1px;height:32px;background:#dcdcdc"></div>
<div class="a" style="left:681px;top:749px;width:1px;height:32px;background:#dcdcdc"></div>
<div class="a" style="left:765px;top:749px;width:1px;height:32px;background:#dcdcdc"></div>
<div class="a" style="left:1079px;top:749px;width:1px;height:32px;background:#dcdcdc"></div>
<div class="a" style="left:1163px;top:749px;width:1px;height:32px;background:#dcdcdc"></div>
<div class="a" style="left:1269px;top:749px;width:1px;height:32px;background:#dcdcdc"></div>
<div class="a" style="left:1352px;top:749px;width:1px;height:32px;background:#dcdcdc"></div>
<div class="c" style="left:241px;top:749px;width:84px;height:32px;font-size:12px;color:#333;letter-spacing:-0.1px">Heena</div>
<div class="c" style="left:325px;top:749px;width:84px;height:32px;font-size:12px;color:#333;letter-spacing:-0.1px">Shinde</div>
<div class="c" style="left:409px;top:749px;width:105px;height:32px;font-size:12.5px;color:#333;letter-spacing:-0.1px">hena@gmail.com</div>
<div class="c" style="left:514px;top:749px;width:84px;height:32px;font-size:12px;color:#333;letter-spacing:-0.1px">7886756543</div>
<div class="c" style="left:598px;top:749px;width:83px;height:32px;font-size:12px;color:#333;letter-spacing:-0.1px">406606</div>
<div class="c" style="left:681px;top:749px;width:84px;height:32px;font-size:12px;color:#333;letter-spacing:-0.1px">M690</div>
<div class="c" style="left:1079px;top:749px;width:84px;height:32px;font-size:12px;color:#333;letter-spacing:-0.1px">12.04</div>
<div class="c" style="left:1163px;top:749px;width:106px;height:32px;font-size:12.5px;color:#333;letter-spacing:-0.1px">Primary Account</div>
<div class="c" style="left:1269px;top:749px;width:83px;height:32px;font-size:12px;color:#333;letter-spacing:-0.1px">Active</div>
<div class="t" style="left:236px;top:801px;font-size:12px;font-weight:bold;color:#1a1a1a">Total Pages : 2 | Page : 1</div>
<div class="c" style="left:1440px;top:794px;width:146px;height:26px;border-radius:3px;background:#8a8a8a;color:#f2f2f2;font-size:13px;letter-spacing:-0.12px">Export Excel</div>
<div class="a" style="left:0;top:838px;width:1602px;height:5px;background:#000"></div>
<!-- CUSTOMER PROFILE MODAL -->
<div class="a" style="left:252px;top:93px;width:1100px;height:656px;background:#fff;border:1px solid #c4c4c4;border-bottom-color:#dcdcdc"></div>
<div class="a" style="left:252px;top:93px;width:1100px;height:37px;background:#038f41"></div>
<div class="t" style="left:264px;top:105px;font-size:16px;color:#e4f0dc;letter-spacing:-0.89px">CUSTOMER PROFILE</div>
<div class="a" style="left:1320px;top:102px;width:20px;height:20px;border-radius:2px;background:#e85e5e"></div>
<svg style="left:1320px;top:102px" width="20" height="20" viewBox="0 0 20 20"><path d="M4.5 4.5 L15.5 15.5 M15.5 4.5 L4.5 15.5" stroke="#fff" stroke-width="1.8"/></svg>
<div class="c" style="left:265.6px;top:137px;width:78.0px;height:37px;border-radius:6px 6px 0 0;background:#0f1424;color:#f2f2f2;font-size:16px;letter-spacing:-0.557px;padding-top:3px">General</div>
<div class="c" style="left:349.5px;top:137px;width:98.0px;height:37px;border-radius:6px 6px 0 0;background:#0f1424;color:#f2f2f2;font-size:16px;letter-spacing:-0.443px;padding-top:3px">Payment</div>
<div class="c" style="left:453.7px;top:137px;width:119.0px;height:37px;border-radius:6px 6px 0 0;background:#0f1424;color:#f2f2f2;font-size:16px;letter-spacing:-0.13px;padding-top:3px">Membership</div>
<div class="c" style="left:579.0px;top:137px;width:129.0px;height:37px;border-radius:6px 6px 0 0;background:#0f1424;color:#f2f2f2;font-size:16px;letter-spacing:-0.247px;padding-top:3px">Playing History</div>
<div class="c" style="left:713.7px;top:137px;width:130.3px;height:37px;border-radius:6px 6px 0 0;background:#0f1424;color:#f2f2f2;font-size:16px;letter-spacing:-0.425px;padding-top:3px">Purchase History</div>
<div class="c" style="left:850.0px;top:137px;width:98.5px;height:37px;border-radius:6px 6px 0 0;background:#0f1424;color:#f2f2f2;font-size:16px;letter-spacing:-0.275px;padding-top:3px">Discount</div>
<div class="c" style="left:954.0px;top:137px;width:124.7px;height:37px;border-radius:6px 6px 0 0;background:#0f1424;color:#f2f2f2;font-size:16px;letter-spacing:-0.16px;padding-top:3px">Loyalty History</div>
<div class="c" style="left:1083.8px;top:137px;width:125.2px;height:37px;border-radius:6px 6px 0 0;background:#0f1424;color:#f2f2f2;font-size:16px;letter-spacing:-0.42px;padding-top:3px">Gift Cards</div>
<div class="c" style="left:1212.5px;top:137px;width:127.1px;height:37px;border-radius:6px 6px 0 0;background:#038f41;color:#f2f2f2;font-size:16px;letter-spacing:-0.4px;padding-top:3px">Customer File</div>
<div class="a" style="left:264px;top:173.5px;width:1076px;height:2px;background:#2ea257"></div>
<div class="a" style="left:880px;top:182.5px;width:313px;height:26px;border:1px solid #a8a8a8;border-left-color:#8a8a8a;background:#fff"></div>
<div class="c" style="left:1203px;top:182.5px;width:127px;height:26.5px;border:2.5px solid #e42429;background:#0f1424;color:#f4f4f4;font-size:16px;letter-spacing:-0.1px;padding-top:3px">Attachment</div>
<div class="a" style="left:265px;top:212px;width:1074px;height:2px;background:#bababa"></div>
<div class="a" style="left:265px;top:225px;width:1074px;height:506px;border:1px solid #a4b8d0;background:#efefef"></div>
<div class="a" style="left:266px;top:226px;width:1071px;height:30px;background:#8a8a8a"></div>
<div class="a" style="left:1144px;top:226px;width:1px;height:30px;background:#b4b4b4"></div>
<div class="a" style="left:1300px;top:226px;width:1px;height:30px;background:#b4b4b4"></div>
<div class="c" style="left:266px;top:226px;width:878px;height:31px;color:#f0f0f0;font-size:12px;letter-spacing:-0.1px">File Name</div>
<div class="c" style="left:1145px;top:226px;width:155px;height:31px;color:#f0f0f0;font-size:12px;letter-spacing:-0.3px">Type</div>
<div class="a" style="left:1301px;top:226px;width:36px;height:30px;overflow:hidden"><div class="t" style="left:0;top:10px;font-size:13px;color:#f0f0f0;letter-spacing:-0.3px">Action</div></div>
<svg style="left:1249px;top:208px" width="34" height="46" viewBox="0 0 34 46"><path d="M16.2 2.2 L31 21.3 H24 V43.6 H9 V21.3 H2 Z" fill="none" stroke="#e8202a" stroke-width="2.4" stroke-linejoin="miter"/></svg>
<!-- OPEN DIALOG -->
<div class="a" style="left:361px;top:253px;width:807px;height:503px;border:3px solid #e8212b;background:#21c25a"></div>
<div class="a" style="left:373px;top:259px;width:17px;height:17px;background:#333"></div>
<svg style="left:373px;top:259px" width="17" height="17" viewBox="0 0 17 17"><circle cx="6.3" cy="8.8" r="3.6" fill="#1e9a4a" stroke="#fff" stroke-width="1"/><circle cx="10.3" cy="8.2" r="4.2" fill="#1e9a4a" stroke="#fff" stroke-width="1"/></svg>
<div class="t" style="left:745px;top:261px;font-size:15px;font-weight:bold;color:#222">Open</div>
<div class="a" style="left:1124px;top:256px;width:33px;height:18px;background:#c75050"></div>
<svg style="left:1124px;top:256px" width="33" height="18" viewBox="0 0 33 18"><path d="M13 3.5 L20 10.5 M20 3.5 L13 10.5" stroke="#fff" stroke-width="2"/></svg>
<div class="a" style="left:371px;top:283px;width:786px;height:462px;background:#f0f0f0"></div>
<div class="a" style="left:371px;top:283px;width:786px;height:37px;background:#fff"></div>
<svg style="left:379px;top:290px" width="60" height="22" viewBox="0 0 60 22"><circle cx="11" cy="11" r="10" fill="none" stroke="#d6d6d6" stroke-width="1.2"/><path d="M5.5 11 H16 M10 6 L5.5 11 L10 16" fill="none" stroke="#c8c8c8" stroke-width="1.8"/><circle cx="43.5" cy="11" r="10" fill="none" stroke="#d6d6d6" stroke-width="1.2"/><path d="M38 11 H48.5 M44 6 L48.5 11 L44 16" fill="none" stroke="#c8c8c8" stroke-width="1.8"/></svg>
<svg style="left:443px;top:299px" width="8" height="5" viewBox="0 0 8 5"><path d="M0.5 0.5 L4 4 L7.5 0.5Z" fill="#d0d0d0"/></svg>
<svg style="left:462px;top:293px" width="12" height="16" viewBox="0 0 12 16"><path d="M6 15 V2 M1.5 6.5 L6 2 L10.5 6.5" fill="none" stroke="#444" stroke-width="1.5"/></svg>
<div class="a" style="left:481px;top:290px;width:445px;height:22px;border:1px solid #d9d9d9;background:#fff"></div>
<div class="a" style="left:902px;top:291px;width:1px;height:20px;background:#e6e6e6"></div>
<svg style="left:485px;top:292px" width="14" height="18" viewBox="0 0 14 18"><path d="M1 1 L7 4 V17 L1 14Z" fill="#f3d77c"/><path d="M7 4 L12 3 V15 L7 17Z" fill="#e2c063"/><rect x="5.5" y="4" width="5" height="11" fill="#e8eef5" stroke="#9ab" stroke-width="0.4"/><path d="M6.5 7 H9.5 M6.5 9 H9.5 M6.5 11 H9.5" stroke="#7a9ab8" stroke-width="0.7"/><path d="M1 1 L7 4 V17 L1 14Z" fill="#f6e08f" opacity="0.6"/></svg>
<svg style="left:506px;top:297px" width="6" height="8" viewBox="0 0 6 8"><path d="M1 0.5 L5 4 L1 7.5Z" fill="#555"/></svg>
<div class="t" style="left:521px;top:295px;font-size:12px;color:#1e1e1e;letter-spacing:-0.45px">This PC</div>
<svg style="left:569px;top:297px" width="6" height="8" viewBox="0 0 6 8"><path d="M1 0.5 L5 4 L1 7.5Z" fill="#555"/></svg>
<div class="t" style="left:583px;top:295px;font-size:12px;color:#1e1e1e;letter-spacing:0.1px">Documents</div>
<svg style="left:653px;top:297px" width="6" height="8" viewBox="0 0 6 8"><path d="M1 0.5 L5 4 L1 7.5Z" fill="#555"/></svg>
<svg style="left:887px;top:297px" width="11" height="8" viewBox="0 0 11 8"><path d="M1 1.5 L5.5 6 L10 1.5" fill="none" stroke="#666" stroke-width="1.6"/></svg>
<svg style="left:907px;top:293px" width="15" height="16" viewBox="0 0 15 16"><path d="M12.3 7.5 A5.3 5.3 0 1 1 9 3" fill="none" stroke="#777" stroke-width="1.9"/><path d="M7.5 0 L11.5 3.2 L7.5 6.2Z" fill="#777"/></svg>
<div class="a" style="left:936px;top:290.5px;width:211px;height:21px;border:1px solid #dedede;background:#fff"></div>
<div class="t" style="left:944px;top:296px;font-size:12px;color:#6d6d6d;letter-spacing:0.02px">Search Documents</div>
<svg style="left:1125px;top:295px" width="12" height="12" viewBox="0 0 12 12"><circle cx="7.5" cy="4.5" r="3.2" fill="none" stroke="#6a6a6a" stroke-width="1.6"/><path d="M5.2 6.8 L1 11" stroke="#6a6a6a" stroke-width="1.8"/></svg>
<div class="a" style="left:371px;top:320px;width:786px;height:34px;background:#f3f4f6"></div>
<div class="t" style="left:389px;top:331px;font-size:12px;color:#1e3b60;letter-spacing:0px">Organize</div>
<svg style="left:444px;top:335px" width="7" height="4" viewBox="0 0 7 4"><path d="M0 0 H7 L3.5 4Z" fill="#1e3b60"/></svg>
<div class="t" style="left:482px;top:331px;font-size:12px;color:#1e3b60;letter-spacing:0.3px">New folder</div>
<svg style="left:1030px;top:330px" width="14" height="11" viewBox="0 0 14 11"><rect x="0.4" y="0.4" width="13.2" height="10.2" fill="#e4f4fb" stroke="#a8b4c0" stroke-width="0.8"/><rect x="1" y="1" width="12" height="2.5" fill="#a9d6f2"/><path d="M1 6 Q3 5 6 7.5 T13 8 V10 H1Z" fill="#2f7a58"/></svg>
<svg style="left:1056px;top:335px" width="7" height="4" viewBox="0 0 7 4"><path d="M0 0 H7 L3.5 4Z" fill="#1e3b60"/></svg>
<svg style="left:1086px;top:329px" width="17" height="15" viewBox="0 0 17 15"><rect x="0.5" y="0.5" width="16" height="14" fill="#f6f8fa" stroke="#9a9a9a" stroke-width="0.8"/><path d="M0.5 2.5 H16.5" stroke="#777" stroke-width="0.9"/><path d="M3 2.5 V14.5" stroke="#aaa" stroke-width="0.7"/><rect x="10" y="3" width="6.3" height="11.3" fill="#7ab8f0"/></svg>
<svg style="left:1125px;top:327px" width="17" height="17" viewBox="0 0 17 17"><circle cx="8.5" cy="8.5" r="8" fill="#9a9a9a"/><circle cx="8.5" cy="8.5" r="7" fill="#1f3fae"/><circle cx="7.5" cy="6.5" r="4" fill="#3a62cc" opacity="0.6"/><text x="8.5" y="12.6" text-anchor="middle" font-family="Liberation Sans" font-weight="bold" font-size="10.5" fill="#fff">?</text></svg>
<div class="a" style="left:371px;top:353px;width:183px;height:310px;background:#fff"></div>
<div class="a" style="left:373px;top:420px;width:180px;height:22.5px;background:#f3f3f3"></div>
<div class="a" style="left:554px;top:353px;width:16px;height:310px;background:#f0f0f0"></div>
<div class="a" style="left:554px;top:405px;width:16px;height:138px;background:#cdcdcd"></div>
<svg style="left:557px;top:358px" width="10" height="7" viewBox="0 0 10 7"><path d="M1 6 L5 2 L9 6" fill="none" stroke="#606060" stroke-width="1.4"/></svg>
<svg style="left:557px;top:651px" width="10" height="7" viewBox="0 0 10 7"><path d="M1 1 L5 5 L9 1" fill="none" stroke="#606060" stroke-width="1.4"/></svg>
<svg style="left:399.0px;top:356.0px" width="17" height="16" viewBox="0 0 17 16"><use href="#i_pc"/></svg>
<div class="t" style="left:421px;top:358.5px;font-size:12px;color:#262626;letter-spacing:-0.45px">This PC</div>
<svg style="left:408.6px;top:378.5px" width="17" height="16" viewBox="0 0 17 16"><use href="#i_net"/></svg>
<div class="t" style="left:429.6px;top:381.0px;font-size:12px;color:#262626;letter-spacing:0px">abhishek (hp)</div>
<svg style="left:408.6px;top:401.0px" width="17" height="16" viewBox="0 0 17 16"><use href="#i_fdesk"/></svg>
<div class="t" style="left:429.6px;top:403.5px;font-size:12px;color:#262626;letter-spacing:-0.1px">Desktop</div>
<svg style="left:408.6px;top:423.5px" width="17" height="16" viewBox="0 0 17 16"><use href="#i_fdoc"/></svg>
<div class="t" style="left:429.6px;top:426.0px;font-size:12px;color:#262626;letter-spacing:0.05px">Documents</div>
<svg style="left:408.6px;top:446.0px" width="17" height="16" viewBox="0 0 17 16"><use href="#i_fdl"/></svg>
<div class="t" style="left:429.6px;top:448.5px;font-size:12px;color:#262626;letter-spacing:0.05px">Downloads</div>
<svg style="left:408.6px;top:468.5px" width="17" height="16" viewBox="0 0 17 16"><use href="#i_fmus"/></svg>
<div class="t" style="left:429.6px;top:471.0px;font-size:12px;color:#262626;letter-spacing:0px">Music</div>
<svg style="left:408.6px;top:491.0px" width="17" height="16" viewBox="0 0 17 16"><use href="#i_fpic"/></svg>
<div class="t" style="left:429.6px;top:493.5px;font-size:12px;color:#262626;letter-spacing:-0.2px">Pictures</div>
<svg style="left:408.6px;top:513.5px" width="17" height="16" viewBox="0 0 17 16"><use href="#i_fvid"/></svg>
<div class="t" style="left:429.6px;top:516.0px;font-size:12px;color:#262626;letter-spacing:-0.1px">Videos</div>
<svg style="left:408.6px;top:536.0px" width="17" height="16" viewBox="0 0 17 16"><use href="#i_win"/></svg>
<div class="t" style="left:429.6px;top:538.5px;font-size:12px;color:#262626;letter-spacing:-0.2px">Windows (C:)</div>
<svg style="left:408.6px;top:558.5px" width="17" height="16" viewBox="0 0 17 16"><use href="#i_drv"/></svg>
<div class="t" style="left:429.6px;top:561.0px;font-size:12px;color:#262626;letter-spacing:-0.6px">RECOVERY (D:)</div>
<svg style="left:408.6px;top:581.0px" width="17" height="16" viewBox="0 0 17 16"><use href="#i_dvd"/></svg>
<div class="t" style="left:429.6px;top:583.5px;font-size:12px;color:#262626;letter-spacing:-0.1px">DVD RW Drive (E:)</div>
<svg style="left:408.6px;top:603.5px" width="17" height="16" viewBox="0 0 17 16"><use href="#i_drv"/></svg>
<div class="t" style="left:429.6px;top:606.0px;font-size:12px;color:#262626;letter-spacing:0px">New Volume (F:)</div>
<svg style="left:408.6px;top:626.0px" width="17" height="16" viewBox="0 0 17 16"><use href="#i_drv"/></svg>
<div class="t" style="left:429.6px;top:628.5px;font-size:12px;color:#262626;letter-spacing:0px">New Volume (G:)</div>
<svg style="left:398.5px;top:648.5px" width="17" height="16" viewBox="0 0 17 16"><use href="#i_lib"/></svg>
<div class="t" style="left:420.5px;top:651.0px;font-size:12px;color:#262626;letter-spacing:0px">Libraries</div>
<div class="a" style="left:572px;top:353px;width:568px;height:310px;background:#fff;overflow:hidden">
<svg style="left:27px;top:8px" width="92" height="104" viewBox="0 0 92 104"><use href="#f_docs"/></svg>
<div class="c" style="left:11px;top:110.0px;width:120px;height:16px;font-size:12px;color:#1e1e1e;letter-spacing:0.1px">Criterion Games</div>
<svg style="left:138px;top:8px" width="92" height="104" viewBox="0 0 92 104"><use href="#f_docs"/></svg>
<div class="c" style="left:122px;top:110.0px;width:120px;height:16px;font-size:12px;color:#1e1e1e;letter-spacing:0.1px">CyberLink</div>
<svg style="left:248px;top:8px" width="92" height="104" viewBox="0 0 92 104"><use href="#f_pdf"/></svg>
<div class="c" style="left:232px;top:110.0px;width:120px;height:16px;font-size:12px;color:#1e1e1e;letter-spacing:0.1px">Downloads</div>
<svg style="left:358px;top:8px" width="92" height="104" viewBox="0 0 92 104"><use href="#f_plain"/></svg>
<div class="c" style="left:342px;top:110.0px;width:120px;height:16px;font-size:12px;color:#1e1e1e;letter-spacing:-0.4px">EA SPORTS(TM)</div>
<div class="c" style="left:342px;top:126.5px;width:120px;height:16px;font-size:12px;color:#1e1e1e;letter-spacing:0.1px">Cricket 07</div>
<svg style="left:469px;top:8px" width="92" height="104" viewBox="0 0 92 104"><use href="#f_white"/></svg>
<div class="c" style="left:453px;top:110.0px;width:120px;height:16px;font-size:12px;color:#1e1e1e;letter-spacing:0.1px">Fluidlab_Water_</div>
<div class="c" style="left:453px;top:126.5px;width:120px;height:16px;font-size:12px;color:#1e1e1e;letter-spacing:0.1px">Management_Da</div>
<div class="c" style="left:453px;top:143.0px;width:120px;height:16px;font-size:12px;color:#1e1e1e;letter-spacing:0.1px">ta_V2</div>
<svg style="left:27px;top:165.5px" width="92" height="104" viewBox="0 0 92 104"><use href="#f_docs"/></svg>
<div class="c" style="left:11px;top:267.0px;width:120px;height:16px;font-size:12px;color:#1e1e1e;letter-spacing:0.1px">GTA San Andreas</div>
<div class="c" style="left:11px;top:283.5px;width:120px;height:16px;font-size:12px;color:#1e1e1e;letter-spacing:0.1px">User Files</div>
<svg style="left:138px;top:165.5px" width="92" height="104" viewBox="0 0 92 104"><use href="#f_white"/></svg>
<div class="c" style="left:122px;top:267.0px;width:120px;height:16px;font-size:12px;color:#1e1e1e;letter-spacing:0.1px">GTA Vice City</div>
<div class="c" style="left:122px;top:283.5px;width:120px;height:16px;font-size:12px;color:#1e1e1e;letter-spacing:0.1px">User Files</div>
<svg style="left:248px;top:165.5px" width="92" height="104" viewBox="0 0 92 104"><use href="#f_docs"/></svg>
<div class="c" style="left:232px;top:267.0px;width:120px;height:16px;font-size:12px;color:#1e1e1e;letter-spacing:0.1px">My Games</div>
<svg style="left:358px;top:165.5px" width="92" height="104" viewBox="0 0 92 104"><use href="#f_plain"/></svg>
<div class="c" style="left:342px;top:267.0px;width:120px;height:16px;font-size:12px;color:#1e1e1e;letter-spacing:0.1px">New folder</div>
<svg style="left:469px;top:165.5px" width="92" height="104" viewBox="0 0 92 104"><use href="#f_white"/></svg>
<div class="c" style="left:453px;top:267.0px;width:120px;height:16px;font-size:12px;color:#1e1e1e;letter-spacing:0.1px">Notes</div>
<svg style="left:27px;top:305px" width="92" height="104" viewBox="0 0 92 104"><use href="#f_plain"/></svg>
<svg style="left:138px;top:305px" width="92" height="104" viewBox="0 0 92 104"><use href="#f_plain"/></svg>
<svg style="left:248px;top:305px" width="92" height="104" viewBox="0 0 92 104"><use href="#f_plain"/></svg>
<svg style="left:358px;top:305px" width="92" height="104" viewBox="0 0 92 104"><use href="#f_plain"/></svg>
<svg style="left:469px;top:305px" width="92" height="104" viewBox="0 0 92 104"><use href="#f_plain"/></svg>
</div>
<div class="a" style="left:1140px;top:353px;width:16px;height:310px;background:#f0f0f0"></div>
<div class="a" style="left:1140px;top:371px;width:16px;height:31px;background:#cdcdcd"></div>
<svg style="left:1143px;top:358px" width="10" height="7" viewBox="0 0 10 7"><path d="M1 6 L5 2 L9 6" fill="none" stroke="#606060" stroke-width="1.4"/></svg>
<svg style="left:1143px;top:651px" width="10" height="7" viewBox="0 0 10 7"><path d="M1 1 L5 5 L9 1" fill="none" stroke="#606060" stroke-width="1.4"/></svg>
<div class="t" style="left:495px;top:681px;font-size:12px;color:#1e1e1e;letter-spacing:-0.1px">File name:</div>
<div class="a" style="left:556px;top:675px;width:584px;height:24px;border:1px solid #7eb4ea;background:#fff"></div>
<svg style="left:1126px;top:683px" width="11" height="8" viewBox="0 0 11 8"><path d="M1 1.5 L5.5 6 L10 1.5" fill="none" stroke="#555" stroke-width="1.6"/></svg>
<div class="c" style="left:964px;top:704px;width:82px;height:27px;border:1.5px solid #3d9ae8;background:linear-gradient(#f2f2f2,#e6e6e6);font-size:12px;color:#1e1e1e">Open</div>
<div class="c" style="left:1058px;top:704px;width:82px;height:27px;border:1px solid #adadad;background:linear-gradient(#f2f2f2,#e6e6e6);font-size:12px;color:#1e1e1e">Cancel</div>
<svg style="left:1145px;top:734px" width="10" height="10" viewBox="0 0 10 10"><g fill="#b8b8b8"><rect x="7" y="1" width="2" height="2"/><rect x="4" y="4" width="2" height="2"/><rect x="7" y="4" width="2" height="2"/><rect x="1" y="7" width="2" height="2"/><rect x="4" y="7" width="2" height="2"/><rect x="7" y="7" width="2" height="2"/></g></svg>

</body></html>
